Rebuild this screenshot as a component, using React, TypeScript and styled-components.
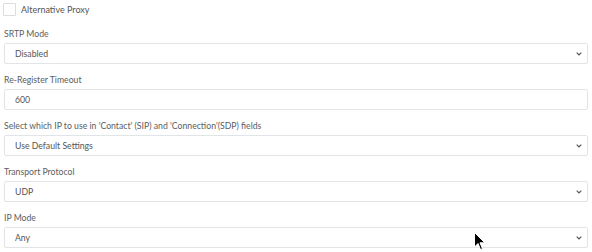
import React from "react";
import styled, { createGlobalStyle } from "styled-components";

const Global = createGlobalStyle`
  html, body { margin: 0; padding: 0; background: #fff; }
  body { font-family: "Lato", "Noto Sans", sans-serif; }
`;

const Page = styled.div`
  position: relative;
  width: 592px;
  height: 252px;
  overflow: hidden;
  padding: 3px 4px 0 4px;
  box-sizing: border-box;
  display: flex;
  flex-direction: column;
`;

const CheckRow = styled.label`
  display: flex;
  align-items: center;
  gap: 5px;
  height: 13px;
  margin-left: -1px;
  margin-bottom: 2px;
  font-size: 9px;
  color: #555;
`;

const Box = styled.span`
  width: 13px;
  height: 13px;
  border: 1px solid #d9dde0;
  border-radius: 1px;
  box-sizing: border-box;
  background: #fff;
`;

const Group = styled.div`
  display: flex;
  flex-direction: column;
  margin-top: 10px;
`;

const Label = styled.div`
  font-size: 8.7px;
  color: #5a5e61;
  line-height: 12px;
  margin-bottom: 3px;
`;

const Field = styled.div`
  height: 21px;
  border: 1px solid #e1e5e8;
  border-radius: 2px;
  box-sizing: border-box;
  display: flex;
  align-items: center;
  justify-content: space-between;
  padding: 0 5px 0 10px;
  font-size: 8.7px;
  color: #555;
`;

const Chevron = () => (
  <svg width="6" height="4" viewBox="0 0 6 4">
    <path d="M0.7 0.7 L3 3 L5.3 0.7" fill="none" stroke="#555" strokeWidth="1.2" />
  </svg>
);

const Cursor = styled.svg`
  position: absolute;
  left: 474px;
  top: 232px;
`;

const Select = ({ value }: { value: string }) => (
  <Field>
    <span>{value}</span>
    <Chevron />
  </Field>
);

export default function App() {
  return (
    <>
      <Global />
      <Page>
        <CheckRow>
          <Box />
          Alternative Proxy
        </CheckRow>
        <Group>
          <Label>SRTP Mode</Label>
          <Select value="Disabled" />
        </Group>
        <Group>
          <Label>Re-Register Timeout</Label>
          <Field>600</Field>
        </Group>
        <Group>
          <Label>Select which IP to use in 'Contact' (SIP) and 'Connection'(SDP) fields</Label>
          <Select value="Use Default Settings" />
        </Group>
        <Group>
          <Label>Transport Protocol</Label>
          <Select value="UDP" />
        </Group>
        <Group>
          <Label>IP Mode</Label>
          <Select value="Any" />
        </Group>
        <Cursor width="12" height="20" viewBox="0 0 12 20">
          <path d="M0.5 0.5 L0.5 15 L4 11.5 L6.5 17.5 L8.5 16.7 L6 10.8 L10.8 10.8 Z" fill="#000" stroke="#fff" strokeWidth="1" />
        </Cursor>
      </Page>
    </>
  );
}
